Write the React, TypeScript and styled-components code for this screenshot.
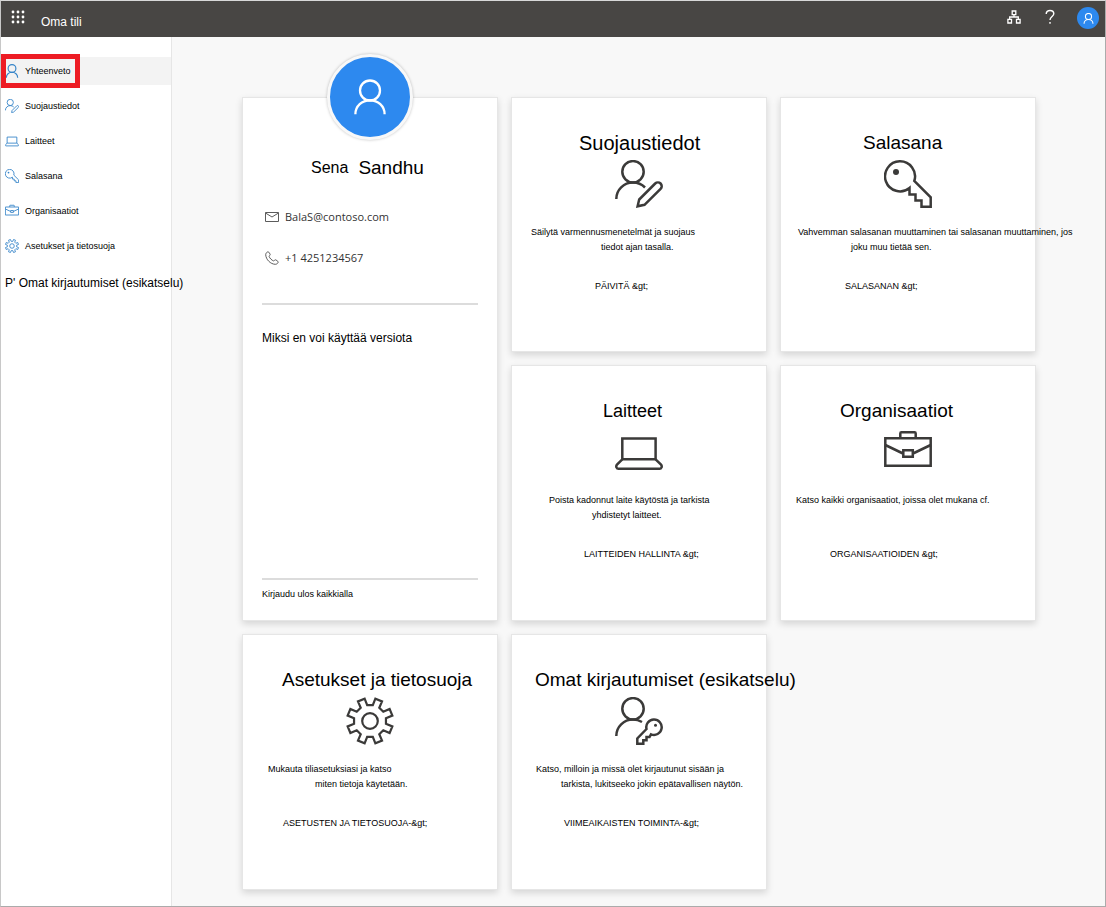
import React from "react";
import styled, { createGlobalStyle } from "styled-components";

const GlobalStyle = createGlobalStyle`
  *, *::before, *::after { box-sizing: border-box; }
  body {
    margin: 0;
    background: #f8f8f8;
    color: #000;
    font-family: "Liberation Sans", Arial, sans-serif;
  }
`;

const Shell = styled.div`
  display: flex;
  flex-direction: column;
  min-height: 100vh;
  background: #f8f8f8;
  border: 1px solid #ababab;
  border-top-color: #d8d8d8;
  border-left-color: #c8c8c8;
`;

const TopBar = styled.header`
  display: flex;
  align-items: flex-start;
  height: 36px;
  padding: 0 6px 0 8px;
  background: #484644;
  color: #fff;
`;

const BarButton = styled.button`
  display: flex;
  align-items: center;
  justify-content: center;
  width: 18px;
  height: 32px;
  padding: 0;
  border: 0;
  background: none;
  color: inherit;
`;

const AppTitle = styled.h1`
  margin: 0 auto 0 14px;
  padding-top: 13px;
  font-size: 12px;
  font-weight: 400;
  line-height: 16px;
`;

const BarActions = styled.div`
  display: flex;
  gap: 18px;
`;

const AccountButton = styled(BarButton)`
  width: 22px;
  height: 22px;
  margin-top: 6px;
  border-radius: 50%;
  background: #2d89ef;
`;

const Body = styled.div`
  display: flex;
  flex: 1;
`;

const Sidebar = styled.nav`
  flex: none;
  width: 171px;
  padding-top: 20px;
  background: #fff;
  border-right: 1px solid #e6e6e6;
`;

const NavList = styled.ul`
  display: flex;
  flex-direction: column;
  gap: 7px;
  margin: 0;
  padding: 0;
  list-style: none;
`;

const NavItem = styled.li<{ $active?: boolean }>`
  position: relative;
  background: ${(p) => (p.$active ? "#f3f3f3" : "transparent")};
`;

const NavLink = styled.a<{ $large?: boolean }>`
  display: flex;
  align-items: center;
  gap: 6px;
  height: ${(p) => (p.$large ? 32 : 28)}px;
  padding-left: 4px;
  color: #000;
  font-size: ${(p) => (p.$large ? 12 : 9)}px;
  line-height: 16px;
  text-decoration: none;
  white-space: nowrap;

  svg { color: #3584c8; }
`;

const Highlight = styled.span`
  position: absolute;
  top: -3px;
  left: 0;
  width: 79px;
  height: 34px;
  border: 5px solid #ed1c24;
  pointer-events: none;
`;

const Main = styled.main`
  flex: 1;
  min-width: 0;
  padding: 60px 0 16px 70px;
`;

const Grid = styled.div`
  display: grid;
  grid-template-columns: repeat(auto-fill, 256px);
  grid-template-rows: 255px;
  grid-auto-rows: 256px;
  gap: 13px;
`;

const Panel = styled.section`
  background: #fff;
  border: 1px solid #e6e6e6;
  box-shadow: 0 3px 7px rgba(0, 0, 0, 0.14);
`;

const Profile = styled(Panel)`
  display: flex;
  flex-direction: column;
  grid-row: span 2;
  padding: 0 19px 18px;
`;

const Avatar = styled.div`
  display: flex;
  align-items: center;
  justify-content: center;
  align-self: center;
  width: 86px;
  height: 86px;
  margin-top: -44px;
  border: 3px solid #f8f8f8;
  border-radius: 50%;
  background: #2d89ef;
  box-shadow: 0 0 3px rgba(0, 0, 0, 0.25);
  color: #fff;
`;

const Name = styled.h2`
  display: flex;
  align-items: center;
  gap: 10px;
  margin: 15px 0 0;
  padding-left: 49px;
  font-weight: 400;
  line-height: 26px;
`;

const FirstName = styled.span`
  font-size: 16px;
`;

const LastName = styled.span`
  font-size: 19px;
`;

const Contacts = styled.div`
  display: flex;
  flex-direction: column;
  gap: 25px;
  margin: 28px 0 37px;
  padding-left: 3px;
`;

const Contact = styled.div`
  display: flex;
  align-items: center;
  gap: 6px;
  color: #333;
  font-family: "Open Sans", "Noto Sans", sans-serif;
  font-size: 11px;
  line-height: 16px;

  svg { color: #5c5c5c; }
`;

const Rule = styled.hr`
  width: 100%;
  height: 2px;
  margin: 0;
  border: 0;
  background: #dcdcdc;
`;

const WhyLink = styled.a`
  margin: 25px 0 auto;
  color: #000;
  font-size: 12px;
  line-height: 16px;
  text-decoration: none;
`;

const SignOutLink = styled.a`
  margin-top: 7px;
  color: #000;
  font-size: 9px;
  line-height: 15px;
  text-decoration: none;
`;

const Card = styled(Panel)`
  display: flex;
  flex-direction: column;
  padding-top: 32px;
  white-space: nowrap;
`;

const CardTitle = styled.h2<{ $inset: number; $size: number }>`
  margin: 0;
  padding-left: ${(p) => p.$inset}px;
  font-size: ${(p) => p.$size}px;
  font-weight: 400;
  line-height: 26px;
`;

const CardIcon = styled.div`
  display: flex;
  justify-content: center;
  height: 48px;
  margin: 4px 0 17px;
  color: #3b3a39;
`;

const CardText = styled.p`
  min-height: 30px;
  margin: 0 0 24px;
  font-size: 9px;
  line-height: 15px;
`;

const TextLine = styled.span<{ $inset: number }>`
  display: block;
  padding-left: ${(p) => p.$inset}px;
`;

const CardLink = styled.a<{ $inset: number }>`
  padding-left: ${(p) => p.$inset}px;
  color: #000;
  font-size: 9px;
  line-height: 15px;
  text-decoration: none;
`;

type IconProps = { size?: number; weight?: number };

const Icon = ({
  size = 48,
  weight = 2.5,
  box = "0 0 48 48",
  children,
}: IconProps & { box?: string; children: React.ReactNode }) => (
  <svg
    width={size}
    height={size}
    viewBox={box}
    fill="none"
    stroke="currentColor"
    strokeWidth={weight}
    aria-hidden="true"
  >
    {children}
  </svg>
);

const UserIcon = (p: IconProps) => (
  <Icon {...p} box="0 0 36 36">
    <circle cx="18" cy="11.5" r="10" />
    <path d="M3.4 35.2C3.4 27 10 21.3 18 21.3S32.6 27 32.6 35.2" />
  </Icon>
);

const UserEditIcon = (p: IconProps) => (
  <Icon {...p}>
    <circle cx="18" cy="11.8" r="10.7" />
    <path d="M1.3 39C1.3 30 8.7 22.6 18 22.6c4.6 0 8.8 1.7 12 4.9" />
    <path d="M22.6 46.3L24.2 39.5 40.2 23.5a3.7 3.7 0 0 1 5.4 5.4L29.5 44.8z" />
  </Icon>
);

const KeyIcon = (p: IconProps) => (
  <Icon {...p}>
    <path d="M25.5 28V34.5H31.5V40.5H37.5V46.7H46.7V37.3L30.3 21A15 15 0 1 0 25.5 28z" />
    <circle cx="12" cy="12" r="3" fill="currentColor" stroke="none" />
  </Icon>
);

const LaptopIcon = (p: IconProps) => (
  <Icon {...p}>
    <path d="M7.3 31.3V10.5H40.6V31.3z" />
    <path d="M7.3 31.3L2 36.5C.5 38.5 1.5 40.8 3.5 40.8H44.5C46.5 40.8 47.5 38.5 46 36.5L40.6 31.3" />
  </Icon>
);

const BriefcaseIcon = (p: IconProps) => (
  <Icon {...p}>
    <path d="M1.3 10.3H46.7V37.8H1.3zM16.3 10V5.5Q16.3 4.3 17.5 4.3H30.5Q31.7 4.3 31.7 5.5V10" />
    <path d="M1.3 17L19 25.5M46.7 17L29 25.5M19.3 22.3H28.8V28.8H19.3z" />
  </Icon>
);

const gearPath = (() => {
  const points: string[] = [];
  const add = (radius: number, degrees: number) => {
    const a = (degrees * Math.PI) / 180;
    points.push(
      `${(24 + radius * Math.sin(a)).toFixed(2)} ${(24 - radius * Math.cos(a)).toFixed(2)}`
    );
  };
  for (let i = 0; i < 8; i += 1) {
    const notch = i * 45;
    add(16.2, notch - 10);
    add(16.2, notch + 10);
    add(23, notch + 13.5);
    add(23, notch + 31.5);
  }
  return `M${points.join("L")}z`;
})();

const GearIcon = (p: IconProps) => (
  <Icon {...p} weight={p.weight ?? 2.2}>
    <path d={gearPath} />
    <circle cx="24" cy="24" r="7.8" />
  </Icon>
);

const UserKeyIcon = (p: IconProps) => (
  <Icon {...p}>
    <circle cx="18" cy="11.8" r="10.7" />
    <path d="M1.3 39C1.3 30 8.7 22.6 18 22.6c3.2 0 6.2.8 9 2.4" />
    <path d="M31.5 32L22.3 41.5V46.7H28.3V43.3H31.5V40H34.5L36 37.3A7.7 7.7 0 1 0 31.5 32z" />
    <circle cx="40.5" cy="28.3" r="1.5" fill="currentColor" stroke="none" />
  </Icon>
);

const MailIcon = () => (
  <Icon size={14} weight={1} box="0 0 14 14">
    <path d="M.5 2.5H13.5V11.5H.5zM.5 3L7 7 13.5 3" />
  </Icon>
);

const PhoneIcon = () => (
  <Icon size={14} weight={1} box="0 0 14 14">
    <path d="M3.2.8C2 .8.7 2.2.7 3.7.9 8.5 5.5 13.2 10.3 13.3c1.5 0 2.9-1.2 2.9-2.4 0-.5-2.3-2.1-2.8-2.1-.7 0-1.2 1.3-1.9 1.1C6.8 9.3 4.7 7.2 4.1 5.5 3.9 4.8 5.2 4.3 5.2 3.6 5.2 3.1 3.7.8 3.2.8z" />
  </Icon>
);

const WaffleIcon = () => (
  <svg width="14" height="14" viewBox="0 0 14 14" fill="currentColor" aria-hidden="true">
    {[2, 7, 12].map((y) =>
      [2, 7, 12].map((x) => <circle key={`${x}-${y}`} cx={x} cy={y} r="1.4" />)
    )}
  </svg>
);

const OrgChartIcon = () => (
  <Icon size={14} weight={1.3} box="0 0 14 14">
    <path d="M5.2 1H8.8V4.6H5.2zM.9 9.4H4.5V13H.9zM9.5 9.4H13.1V13H9.5zM7 4.6V7M2.7 9.4V7H11.3V9.4" />
  </Icon>
);

const HelpIcon = () => (
  <Icon size={16} weight={1.4} box="0 0 16 16">
    <path d="M4.2 5C4.2 2.7 5.8 1.5 8 1.5s3.8 1.3 3.8 3.3C11.8 7.5 8 7.5 8 11" />
    <path d="M8 13V14.8" />
  </Icon>
);

const navItems = [
  { label: "Yhteenveto", icon: UserIcon, active: true },
  { label: "Suojaustiedot", icon: UserEditIcon },
  { label: "Laitteet", icon: LaptopIcon },
  { label: "Salasana", icon: KeyIcon },
  { label: "Organisaatiot", icon: BriefcaseIcon },
  { label: "Asetukset ja tietosuoja", icon: GearIcon },
  { label: "P' Omat kirjautumiset (esikatselu)" },
];

type CardData = {
  title: string;
  titleInset: number;
  titleSize?: number;
  icon: React.ComponentType<IconProps>;
  lines: { text: string; inset: number }[];
  action: string;
  actionInset: number;
};

const cards: CardData[] = [
  {
    title: "Suojaustiedot",
    titleInset: 67,
    titleSize: 20,
    icon: UserEditIcon,
    lines: [
      { text: "Säilytä varmennusmenetelmät ja suojaus", inset: 19 },
      { text: "tiedot ajan tasalla.", inset: 89 },
    ],
    action: "PÄIVITÄ &gt;",
    actionInset: 83,
  },
  {
    title: "Salasana",
    titleInset: 82,
    icon: KeyIcon,
    lines: [
      { text: "Vahvemman salasanan muuttaminen tai salasanan muuttaminen, jos", inset: 17 },
      { text: "joku muu tietää sen.", inset: 70 },
    ],
    action: "SALASANAN &gt;",
    actionInset: 64,
  },
  {
    title: "Laitteet",
    titleInset: 91,
    titleSize: 18,
    icon: LaptopIcon,
    lines: [
      { text: "Poista kadonnut laite käytöstä ja tarkista", inset: 37 },
      { text: "yhdistetyt laitteet.", inset: 80 },
    ],
    action: "LAITTEIDEN HALLINTA &gt;",
    actionInset: 72,
  },
  {
    title: "Organisaatiot",
    titleInset: 59,
    icon: BriefcaseIcon,
    lines: [{ text: "Katso kaikki organisaatiot, joissa olet mukana cf.", inset: 15 }],
    action: "ORGANISAATIOIDEN &gt;",
    actionInset: 49,
  },
  {
    title: "Asetukset ja tietosuoja",
    titleInset: 39,
    icon: GearIcon,
    lines: [
      { text: "Mukauta tiliasetuksiasi ja katso", inset: 25 },
      { text: "miten tietoja käytetään.", inset: 72 },
    ],
    action: "ASETUSTEN JA TIETOSUOJA-&gt;",
    actionInset: 40,
  },
  {
    title: "Omat kirjautumiset (esikatselu)",
    titleInset: 23,
    icon: UserKeyIcon,
    lines: [
      { text: "Katso, milloin ja missä olet kirjautunut sisään ja", inset: 24 },
      { text: "tarkista, lukitseeko jokin epätavallisen näytön.", inset: 49 },
    ],
    action: "VIIMEAIKAISTEN TOIMINTA-&gt;",
    actionInset: 52,
  },
];

export default function App() {
  return (
    <Shell>
      <GlobalStyle />
      <TopBar>
        <BarButton type="button" aria-label="Sovellukset">
          <WaffleIcon />
        </BarButton>
        <AppTitle>Oma tili</AppTitle>
        <BarActions>
          <BarButton type="button" aria-label="Organisaatio">
            <OrgChartIcon />
          </BarButton>
          <BarButton type="button" aria-label="Ohje">
            <HelpIcon />
          </BarButton>
          <AccountButton type="button" aria-label="Tili">
            <UserIcon size={11} weight={3.5} />
          </AccountButton>
        </BarActions>
      </TopBar>
      <Body>
        <Sidebar>
          <NavList>
            {navItems.map(({ label, icon: ItemIcon, active }) => (
              <NavItem key={label} $active={active}>
                <NavLink href="#" $large={!ItemIcon} aria-current={active ? "page" : undefined}>
                  {ItemIcon && <ItemIcon size={14} weight={3} />}
                  {label}
                </NavLink>
                {active && <Highlight />}
              </NavItem>
            ))}
          </NavList>
        </Sidebar>
        <Main>
          <Grid>
            <Profile>
              <Avatar>
                <UserIcon size={36} weight={2.3} />
              </Avatar>
              <Name>
                <FirstName>Sena</FirstName>
                <LastName>Sandhu</LastName>
              </Name>
              <Contacts>
                <Contact>
                  <MailIcon />
                  BalaS@contoso.com
                </Contact>
                <Contact>
                  <PhoneIcon />
                  +1 4251234567
                </Contact>
              </Contacts>
              <Rule />
              <WhyLink href="#">Miksi en voi käyttää versiota</WhyLink>
              <Rule />
              <SignOutLink href="#">Kirjaudu ulos kaikkialla</SignOutLink>
            </Profile>
            {cards.map(({ icon: PictureIcon, ...card }) => (
              <Card key={card.title}>
                <CardTitle $inset={card.titleInset} $size={card.titleSize ?? 19}>
                  {card.title}
                </CardTitle>
                <CardIcon>
                  <PictureIcon />
                </CardIcon>
                <CardText>
                  {card.lines.map((line) => (
                    <TextLine key={line.text} $inset={line.inset}>
                      {line.text}
                    </TextLine>
                  ))}
                </CardText>
                <CardLink href="#" $inset={card.actionInset}>
                  {card.action}
                </CardLink>
              </Card>
            ))}
          </Grid>
        </Main>
      </Body>
    </Shell>
  );
}
